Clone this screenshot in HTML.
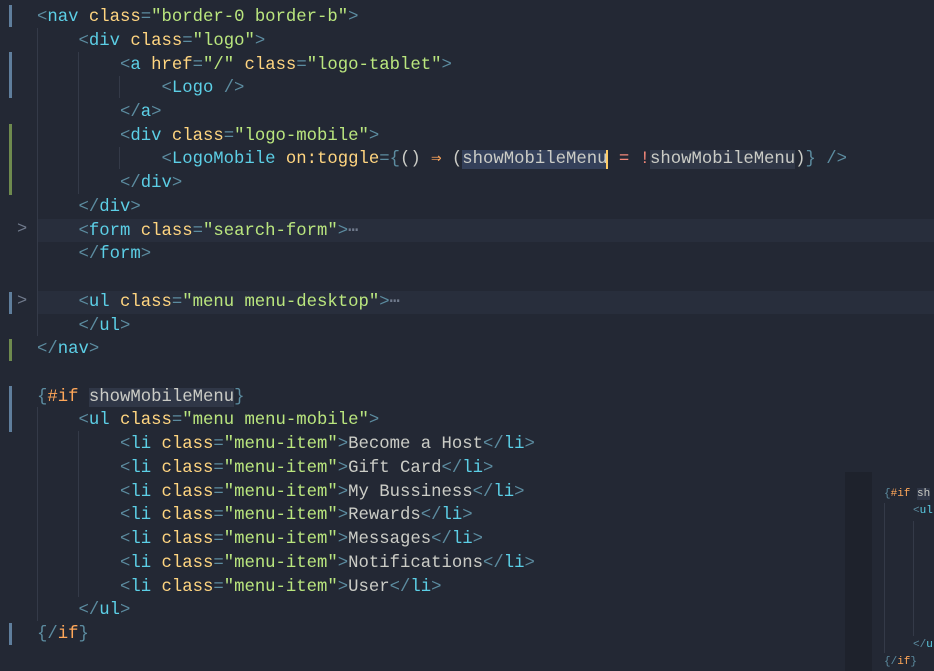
<!DOCTYPE html>
<html><head><style>
body{margin:0;width:934px;height:671px;background:#1f2430;overflow:hidden;position:relative;font-family:"Liberation Mono",monospace;font-size:17.3px;}
#bg{position:absolute;left:0;top:0;width:934px;height:671px;background:#232834;}
.l{position:absolute;left:37px;height:23.73px;line-height:23.73px;white-space:pre;color:#cbccc6;padding-top:2px;}
.hl{position:absolute;left:37px;width:897px;height:23px;background:#282e3c;}
.p{color:#5c8ca0}.t{color:#5ccfe6}.a{color:#ffd580}.s{color:#bae67e}.x{color:#cbccc6}.o{color:#ffa759}.r{color:#f28779}
.sel{background:#34405a}.sel2{background:#303747}
.bar{position:absolute;left:9px;width:3px}
.g{position:absolute;width:1px;background:#343a48}
.fold{position:absolute;left:17px;color:#707a8c;font-size:17px}
</style></head><body>
<div id="bg"></div>
<div class="hl" style="top:219px"></div>
<div class="hl" style="top:291px"></div>
<div class="bar" style="top:5px;height:22px;background:#5f7e9c"></div>
<div class="bar" style="top:52px;height:46px;background:#5f7e9c"></div>
<div class="bar" style="top:124px;height:71px;background:#6e8a4e"></div>
<div class="bar" style="top:292px;height:22px;background:#5f7e9c"></div>
<div class="bar" style="top:339px;height:22px;background:#6e8a4e"></div>
<div class="bar" style="top:386px;height:46px;background:#5f7e9c"></div>
<div class="bar" style="top:623px;height:22px;background:#5f7e9c"></div>
<div class="g" style="left:37px;top:28px;height:308px"></div>
<div class="g" style="left:78px;top:52px;height:142px"></div>
<div class="g" style="left:119px;top:76px;height:22px"></div>
<div class="g" style="left:119px;top:147px;height:22px"></div>
<div class="g" style="left:37px;top:407px;height:214px"></div>
<div class="g" style="left:78px;top:431px;height:166px"></div>
<div class="fold" style="top:220px">&gt;</div>
<div class="fold" style="top:292px">&gt;</div>

<div class="l" style="top:4px"><span class="p">&lt;</span><span class="t">nav</span> <span class="a">class</span><span class="p">=</span><span class="s">"border-0 border-b"</span><span class="p">&gt;</span></div>
<div class="l" style="top:27.7px">    <span class="p">&lt;</span><span class="t">div</span> <span class="a">class</span><span class="p">=</span><span class="s">"logo"</span><span class="p">&gt;</span></div>
<div class="l" style="top:51.5px">        <span class="p">&lt;</span><span class="t">a</span> <span class="a">href</span><span class="p">=</span><span class="s">"/"</span> <span class="a">class</span><span class="p">=</span><span class="s">"logo-tablet"</span><span class="p">&gt;</span></div>
<div class="l" style="top:75.2px">            <span class="p">&lt;</span><span class="t">Logo</span> <span class="p">/&gt;</span></div>
<div class="l" style="top:98.9px">        <span class="p">&lt;/</span><span class="t">a</span><span class="p">&gt;</span></div>
<div class="l" style="top:122.7px">        <span class="p">&lt;</span><span class="t">div</span> <span class="a">class</span><span class="p">=</span><span class="s">"logo-mobile"</span><span class="p">&gt;</span></div>
<div class="l" style="top:146.4px">            <span class="p">&lt;</span><span class="t">LogoMobile</span> <span class="a">on:toggle</span><span class="p">={</span>() <span class="o">⇒</span> (<span class="sel">showMobileMenu</span><span style="border-left:2px solid #ffcc66;margin-left:-1px"></span> <span class="r">=</span> <span class="r">!</span><span class="sel2">showMobileMenu</span>)<span class="p">}</span> <span class="p">/&gt;</span></div>
<div class="l" style="top:170.1px">        <span class="p">&lt;/</span><span class="t">div</span><span class="p">&gt;</span></div>
<div class="l" style="top:193.8px">    <span class="p">&lt;/</span><span class="t">div</span><span class="p">&gt;</span></div>
<div class="l" style="top:217.6px">    <span class="p">&lt;</span><span class="t">form</span> <span class="a">class</span><span class="p">=</span><span class="s">"search-form"</span><span class="p">&gt;</span><span style="color:#707a8c">⋯</span></div>
<div class="l" style="top:241.3px">    <span class="p">&lt;/</span><span class="t">form</span><span class="p">&gt;</span></div>
<div class="l" style="top:288.8px">    <span class="p">&lt;</span><span class="t">ul</span> <span class="a">class</span><span class="p">=</span><span class="s">"menu menu-desktop"</span><span class="p">&gt;</span><span style="color:#707a8c">⋯</span></div>
<div class="l" style="top:312.5px">    <span class="p">&lt;/</span><span class="t">ul</span><span class="p">&gt;</span></div>
<div class="l" style="top:336.2px"><span class="p">&lt;/</span><span class="t">nav</span><span class="p">&gt;</span></div>
<div class="l" style="top:383.7px"><span class="p">{</span><span class="o">#if</span> <span class="sel2">showMobileMenu</span><span class="p">}</span></div>
<div class="l" style="top:407.4px">    <span class="p">&lt;</span><span class="t">ul</span> <span class="a">class</span><span class="p">=</span><span class="s">"menu menu-mobile"</span><span class="p">&gt;</span></div>
<div class="l" style="top:431.1px">        <span class="p">&lt;</span><span class="t">li</span> <span class="a">class</span><span class="p">=</span><span class="s">"menu-item"</span><span class="p">&gt;</span>Become a Host<span class="p">&lt;/</span><span class="t">li</span><span class="p">&gt;</span></div>
<div class="l" style="top:454.8px">        <span class="p">&lt;</span><span class="t">li</span> <span class="a">class</span><span class="p">=</span><span class="s">"menu-item"</span><span class="p">&gt;</span>Gift Card<span class="p">&lt;/</span><span class="t">li</span><span class="p">&gt;</span></div>
<div class="l" style="top:478.6px">        <span class="p">&lt;</span><span class="t">li</span> <span class="a">class</span><span class="p">=</span><span class="s">"menu-item"</span><span class="p">&gt;</span>My Bussiness<span class="p">&lt;/</span><span class="t">li</span><span class="p">&gt;</span></div>
<div class="l" style="top:502.3px">        <span class="p">&lt;</span><span class="t">li</span> <span class="a">class</span><span class="p">=</span><span class="s">"menu-item"</span><span class="p">&gt;</span>Rewards<span class="p">&lt;/</span><span class="t">li</span><span class="p">&gt;</span></div>
<div class="l" style="top:526px">        <span class="p">&lt;</span><span class="t">li</span> <span class="a">class</span><span class="p">=</span><span class="s">"menu-item"</span><span class="p">&gt;</span>Messages<span class="p">&lt;/</span><span class="t">li</span><span class="p">&gt;</span></div>
<div class="l" style="top:549.7px">        <span class="p">&lt;</span><span class="t">li</span> <span class="a">class</span><span class="p">=</span><span class="s">"menu-item"</span><span class="p">&gt;</span>Notifications<span class="p">&lt;/</span><span class="t">li</span><span class="p">&gt;</span></div>
<div class="l" style="top:573.5px">        <span class="p">&lt;</span><span class="t">li</span> <span class="a">class</span><span class="p">=</span><span class="s">"menu-item"</span><span class="p">&gt;</span>User<span class="p">&lt;/</span><span class="t">li</span><span class="p">&gt;</span></div>
<div class="l" style="top:597.2px">    <span class="p">&lt;/</span><span class="t">ul</span><span class="p">&gt;</span></div>
<div class="l" style="top:620.9px"><span class="p">{/</span><span class="o">if</span><span class="p">}</span></div>

<div style="position:absolute;left:845px;top:472px;width:27px;height:199px;background:#1e222c"></div>
<div style="position:absolute;left:884px;top:487px;font-size:11px;line-height:14px;white-space:pre"><span class="p">{</span><span class="o">#if</span> <span class="sel2 x">sh</span></div>
<div style="position:absolute;left:913px;top:504px;font-size:11px;line-height:14px;white-space:pre"><span class="p">&lt;</span><span class="t">ul</span></div>
<div class="g" style="left:884px;top:503px;height:150px"></div>
<div class="g" style="left:913px;top:521px;height:115px"></div>
<div style="position:absolute;left:913px;top:638px;font-size:11px;line-height:14px;white-space:pre"><span class="p">&lt;/</span><span class="t">u</span></div>
<div style="position:absolute;left:884px;top:655px;font-size:11px;line-height:14px;white-space:pre"><span class="p">{/</span><span class="o">if</span><span class="p">}</span></div>
</body></html>
